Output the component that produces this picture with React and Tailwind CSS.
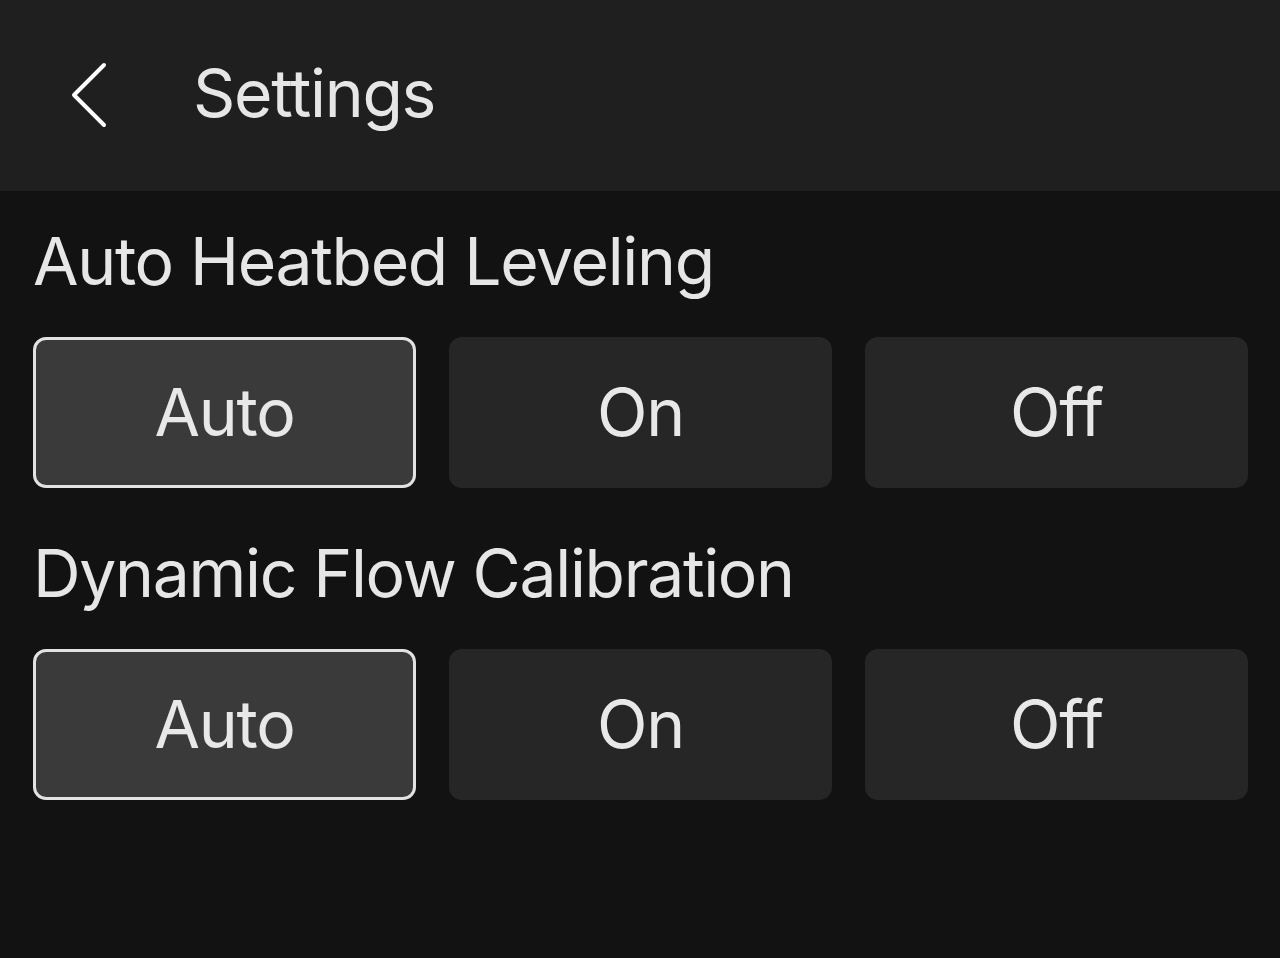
import React, { useState } from "react";

const OPTIONS = ["Auto", "On", "Off"];

const SECTIONS = [
    { key: "heatbed", title: "Auto Heatbed Leveling" },
    { key: "flow", title: "Dynamic Flow Calibration" },
];

const OptionRow = ({ value, onChange }) => {
    return (
        <div className="grid grid-cols-3 gap-[33px]">
            {OPTIONS.map((opt) => {
                const active = value === opt;
                return (
                    <button
                        key={opt}
                        onClick={() => onChange(opt)}
                        className={
                            active
                                ? "h-[151px] rounded-[13px] bg-[#3a3a3a] border-[3px] border-[#e2e2e2] text-[#e8e8e8] text-[66px] tracking-[-0.02em] flex items-center justify-center"
                                : "h-[151px] rounded-[13px] bg-[#262626] border-[3px] border-transparent text-[#e8e8e8] text-[66px] tracking-[-0.02em] flex items-center justify-center"
                        }
                    >
                        {opt}
                    </button>
                );
            })}
        </div>
    );
};

const App = () => {
    const [values, setValues] = useState({ heatbed: "Auto", flow: "Auto" });

    return (
        <div
            className="w-[1280px] h-[958px] bg-[#121212] overflow-hidden"
            style={{ fontFamily: "Inter, 'Noto Sans', sans-serif" }}
        >
            <header className="h-[191px] bg-[#1f1f1f] flex items-center pl-[70px]">
                <svg width="40" height="68" viewBox="0 0 40 68" fill="none">
                    <path
                        d="M34 3 L4 33 L34 63"
                        stroke="#ffffff"
                        strokeWidth="4"
                        strokeLinecap="round"
                        strokeLinejoin="round"
                    />
                </svg>
                <h1 className="ml-[83px] text-[66px] tracking-[-0.02em] text-[#e6e6e6] mt-[-4px]">Settings</h1>
            </header>

            <main className="px-[33px] pr-[32px] pt-[20px]">
                {SECTIONS.map((section, i) => (
                    <section key={section.key} className={i > 0 ? "mt-[35px]" : ""}>
                        <h2 className="h-[100px] flex items-center text-[66px] tracking-[-0.02em] text-[#e6e6e6]">
                            {section.title}
                        </h2>
                        <div className="mt-[26px]">
                            <OptionRow
                                value={values[section.key]}
                                onChange={(v) => setValues({ ...values, [section.key]: v })}
                            />
                        </div>
                    </section>
                ))}
            </main>
        </div>
    );
};

export default App;
